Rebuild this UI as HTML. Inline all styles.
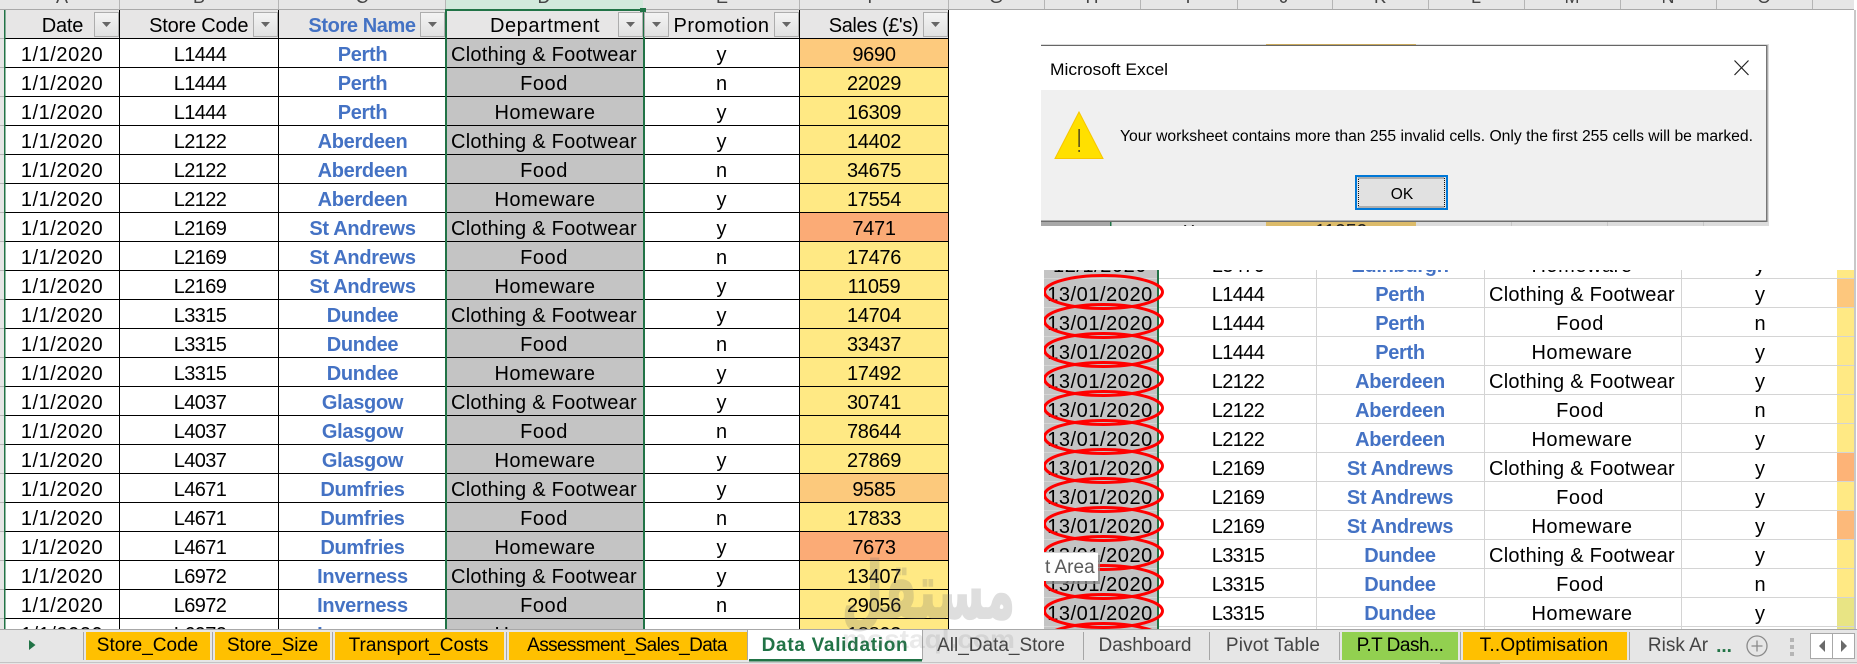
<!DOCTYPE html>
<html lang="en"><head><meta charset="utf-8"><title>Data Validation</title>
<style>
html,body{margin:0;padding:0;background:#fff;width:1857px;height:664px;overflow:hidden}
svg{display:block;font-family:"Liberation Sans",sans-serif}
.c text{text-anchor:middle;font-size:20px;fill:#000}
.b text{text-anchor:middle;font-size:20px;font-weight:bold;letter-spacing:-.3px;fill:#4472c4}
.h{font-size:18px;fill:#444;text-anchor:middle}
.t text{font-size:19px;text-anchor:middle;fill:#000}
.g text{font-size:19px;text-anchor:middle;fill:#444}
.d{letter-spacing:.55px}
.k{letter-spacing:-.6px}
.v{letter-spacing:-.3px}
.cf{letter-spacing:.25px}
.m{letter-spacing:.55px}
</style></head><body>
<svg width="1857" height="664" viewBox="0 0 1857 664" xmlns="http://www.w3.org/2000/svg">
<defs>
<clipPath id="cl"><rect x="0" y="0" width="960" height="629"/></clipPath>
<clipPath id="cr"><rect x="1044" y="270" width="813" height="359"/></clipPath>
<clipPath id="cs"><rect x="1041" y="221" width="728" height="5"/></clipPath>
<linearGradient id="fb" x1="0" y1="0" x2="0" y2="1"><stop offset="0" stop-color="#f4f4f4"/><stop offset="1" stop-color="#e0e0e0"/></linearGradient>
<g id="f"><rect x=".5" y=".5" width="24" height="24" fill="url(#fb)" stroke="#adadad"/><path d="M8 10h9l-4.500 5z" fill="#666"/></g>
</defs>
<rect width="1857" height="664" fill="#fff"/>

<!-- column header bar -->
<rect x="0" y="0" width="1854" height="9" fill="#e6e6e6"/>
<rect x="445" y="0" width="198" height="9" fill="#d2e9dc"/>
<rect x="0" y="9" width="1854" height="1" fill="#a9a9a9"/>
<path d="M119.500 0V9M278.500 0V9M445.500 0V9M799.500 0V9M948.500 0V9M1044.500 0V9M1140.500 0V9M1237.500 0V9M1332.500 0V9M1428.500 0V9M1524.500 0V9M1620.500 0V9M1716.500 0V9M1812.500 0V9" stroke="#b5b5b5" fill="none"/>
<g>
<text class="h" x="62" y="3">A</text><text class="h" x="199" y="3">B</text><text class="h" x="362" y="3">C</text><text class="h" x="544" y="3" fill="#217346">D</text><text class="h" x="722" y="3">E</text><text class="h" x="873" y="3">F</text><text class="h" x="996" y="3">G</text><text class="h" x="1092" y="3">H</text><text class="h" x="1188" y="3">I</text><text class="h" x="1284" y="3">J</text><text class="h" x="1380" y="3">K</text><text class="h" x="1476" y="3">L</text><text class="h" x="1572" y="3">M</text><text class="h" x="1668" y="3">N</text><text class="h" x="1764" y="3">O</text>
</g>

<!-- left table -->
<g clip-path="url(#cl)">
<rect x="0" y="10" width="4" height="620" fill="#e6e6e6"/>
<path d="M0 38.500H4M0 67.500H4M0 96.500H4M0 125.500H4M0 154.500H4M0 183.500H4M0 212.500H4M0 241.500H4M0 270.500H4M0 299.500H4M0 328.500H4M0 357.500H4M0 386.500H4M0 415.500H4M0 444.500H4M0 473.500H4M0 502.500H4M0 531.500H4M0 560.500H4M0 589.500H4M0 618.500H4" stroke="#b5b5b5"/>
<rect x="5" y="10" width="943" height="28" fill="#e7e6e6"/>
<rect x="445" y="39" width="199" height="590" fill="#c4c4c4"/>
<rect x="799" y="39" width="149" height="590" fill="#ffe984"/>
<rect x="800" y="39" width="148" height="28" fill="#fdca7d"/>
<rect x="800" y="213" width="148" height="28" fill="#fbab76"/>
<rect x="800" y="474" width="148" height="28" fill="#fcc97c"/>
<rect x="800" y="532" width="148" height="28" fill="#fbab76"/>
<path d="M5 38.500H948M5 67.500H948M5 96.500H948M5 125.500H948M5 154.500H948M5 183.500H948M5 212.500H948M5 241.500H948M5 270.500H948M5 299.500H948M5 328.500H948M5 357.500H948M5 386.500H948M5 415.500H948M5 444.500H948M5 473.500H948M5 502.500H948M5 531.500H948M5 560.500H948M5 589.500H948M5 618.500H948M119.500 10V629M278.500 10V629M799.500 10V629M948.500 10V629" stroke="#000" fill="none"/>
<rect x="4" y="10" width="1.500" height="620" fill="#217346"/>
<rect x="445" y="10" width="2" height="620" fill="#217346"/>
<rect x="643" y="10" width="2" height="620" fill="#217346"/>
<rect x="445" y="9" width="200" height="2" fill="#217346"/>
<rect x="640" y="8" width="6" height="6" fill="#217346"/>

<use href="#f" x="94" y="12"/><use href="#f" x="253" y="12"/><use href="#f" x="420" y="12"/><use href="#f" x="618" y="12"/><use href="#f" x="644" y="12"/><use href="#f" x="774" y="12"/><use href="#f" x="923" y="12"/>

<g class="c">
<text x="62.500" y="32" style="letter-spacing:-.2px">Date</text><text x="198.700" y="32" style="letter-spacing:-.2px">Store Code</text><text x="545" y="32" class="m">Department</text><text x="721.500" y="32" class="m">Promotion</text><text x="873.500" y="32" style="letter-spacing:-.4px">Sales (£'s)</text>
<text class="d" x="62" y="61">1/1/2020</text><text class="d" x="62" y="90">1/1/2020</text><text class="d" x="62" y="119">1/1/2020</text><text class="d" x="62" y="148">1/1/2020</text><text class="d" x="62" y="177">1/1/2020</text><text class="d" x="62" y="206">1/1/2020</text><text class="d" x="62" y="235">1/1/2020</text><text class="d" x="62" y="264">1/1/2020</text><text class="d" x="62" y="293">1/1/2020</text><text class="d" x="62" y="322">1/1/2020</text><text class="d" x="62" y="351">1/1/2020</text><text class="d" x="62" y="380">1/1/2020</text><text class="d" x="62" y="409">1/1/2020</text><text class="d" x="62" y="438">1/1/2020</text><text class="d" x="62" y="467">1/1/2020</text><text class="d" x="62" y="496">1/1/2020</text><text class="d" x="62" y="525">1/1/2020</text><text class="d" x="62" y="554">1/1/2020</text><text class="d" x="62" y="583">1/1/2020</text><text class="d" x="62" y="612">1/1/2020</text><text class="d" x="62" y="641">1/1/2020</text>
<text class="k" x="200" y="61">L1444</text><text class="k" x="200" y="90">L1444</text><text class="k" x="200" y="119">L1444</text><text class="k" x="200" y="148">L2122</text><text class="k" x="200" y="177">L2122</text><text class="k" x="200" y="206">L2122</text><text class="k" x="200" y="235">L2169</text><text class="k" x="200" y="264">L2169</text><text class="k" x="200" y="293">L2169</text><text class="k" x="200" y="322">L3315</text><text class="k" x="200" y="351">L3315</text><text class="k" x="200" y="380">L3315</text><text class="k" x="200" y="409">L4037</text><text class="k" x="200" y="438">L4037</text><text class="k" x="200" y="467">L4037</text><text class="k" x="200" y="496">L4671</text><text class="k" x="200" y="525">L4671</text><text class="k" x="200" y="554">L4671</text><text class="k" x="200" y="583">L6972</text><text class="k" x="200" y="612">L6972</text><text class="k" x="200" y="641">L6972</text>
<text class="cf" x="544" y="61">Clothing &amp; Footwear</text><text class="m" x="544" y="90">Food</text><text class="m" x="545" y="119">Homeware</text><text class="cf" x="544" y="148">Clothing &amp; Footwear</text><text class="m" x="544" y="177">Food</text><text class="m" x="545" y="206">Homeware</text><text class="cf" x="544" y="235">Clothing &amp; Footwear</text><text class="m" x="544" y="264">Food</text><text class="m" x="545" y="293">Homeware</text><text class="cf" x="544" y="322">Clothing &amp; Footwear</text><text class="m" x="544" y="351">Food</text><text class="m" x="545" y="380">Homeware</text><text class="cf" x="544" y="409">Clothing &amp; Footwear</text><text class="m" x="544" y="438">Food</text><text class="m" x="545" y="467">Homeware</text><text class="cf" x="544" y="496">Clothing &amp; Footwear</text><text class="m" x="544" y="525">Food</text><text class="m" x="545" y="554">Homeware</text><text class="cf" x="544" y="583">Clothing &amp; Footwear</text><text class="m" x="544" y="612">Food</text><text class="m" x="545" y="641">Homeware</text>
<text x="721.500" y="61">y</text><text x="721.500" y="90">n</text><text x="721.500" y="119">y</text><text x="721.500" y="148">y</text><text x="721.500" y="177">n</text><text x="721.500" y="206">y</text><text x="721.500" y="235">y</text><text x="721.500" y="264">n</text><text x="721.500" y="293">y</text><text x="721.500" y="322">y</text><text x="721.500" y="351">n</text><text x="721.500" y="380">y</text><text x="721.500" y="409">y</text><text x="721.500" y="438">n</text><text x="721.500" y="467">y</text><text x="721.500" y="496">y</text><text x="721.500" y="525">n</text><text x="721.500" y="554">y</text><text x="721.500" y="583">y</text><text x="721.500" y="612">n</text><text x="721.500" y="641">y</text>
<text class="v" x="874" y="61">9690</text><text class="v" x="874" y="90">22029</text><text class="v" x="874" y="119">16309</text><text class="v" x="874" y="148">14402</text><text class="v" x="874" y="177">34675</text><text class="v" x="874" y="206">17554</text><text class="v" x="874" y="235">7471</text><text class="v" x="874" y="264">17476</text><text class="v" x="874" y="293">11059</text><text class="v" x="874" y="322">14704</text><text class="v" x="874" y="351">33437</text><text class="v" x="874" y="380">17492</text><text class="v" x="874" y="409">30741</text><text class="v" x="874" y="438">78644</text><text class="v" x="874" y="467">27869</text><text class="v" x="874" y="496">9585</text><text class="v" x="874" y="525">17833</text><text class="v" x="874" y="554">7673</text><text class="v" x="874" y="583">13407</text><text class="v" x="874" y="612">29056</text><text class="v" x="874" y="641">18803</text>
</g>
<g class="b">
<text x="362" y="32" style="letter-spacing:-.4px">Store Name</text>
<text x="362.500" y="61">Perth</text><text x="362.500" y="90">Perth</text><text x="362.500" y="119">Perth</text><text x="362.500" y="148">Aberdeen</text><text x="362.500" y="177">Aberdeen</text><text x="362.500" y="206">Aberdeen</text><text x="362.500" y="235">St Andrews</text><text x="362.500" y="264">St Andrews</text><text x="362.500" y="293">St Andrews</text><text x="362.500" y="322">Dundee</text><text x="362.500" y="351">Dundee</text><text x="362.500" y="380">Dundee</text><text x="362.500" y="409">Glasgow</text><text x="362.500" y="438">Glasgow</text><text x="362.500" y="467">Glasgow</text><text x="362.500" y="496">Dumfries</text><text x="362.500" y="525">Dumfries</text><text x="362.500" y="554">Dumfries</text><text x="362.500" y="583">Inverness</text><text x="362.500" y="612">Inverness</text><text x="362.500" y="641">Inverness</text>
</g>
</g>

<!-- right table -->
<g clip-path="url(#cr)">
<rect x="1044" y="270" width="113" height="359" fill="#c4c4c4"/>
<rect x="1837" y="270" width="17" height="359" fill="#ffe984"/>
<rect x="1837" y="278" width="17" height="29" fill="#fdc77d"/>
<rect x="1837" y="452" width="17" height="29" fill="#fdb377"/>
<rect x="1837" y="510" width="17" height="29" fill="#fcb97a"/>
<rect x="1837" y="597" width="17" height="32" fill="#e8e484"/>
<path d="M1044 278.500H1854M1044 307.500H1854M1044 336.500H1854M1044 365.500H1854M1044 394.500H1854M1044 423.500H1854M1044 452.500H1854M1044 481.500H1854M1044 510.500H1854M1044 539.500H1854M1044 568.500H1854M1044 597.500H1854M1044 626.500H1854M1316.500 270V629M1484.500 270V629M1681.500 270V629" stroke="#d4d4d4" fill="none"/>
<rect x="1157" y="270" width="2" height="359" fill="#217346"/>
<g class="c">
<text class="d" x="1100" y="272">12/1/2020</text><text class="d" x="1100" y="301">13/01/2020</text><text class="d" x="1100" y="330">13/01/2020</text><text class="d" x="1100" y="359">13/01/2020</text><text class="d" x="1100" y="388">13/01/2020</text><text class="d" x="1100" y="417">13/01/2020</text><text class="d" x="1100" y="446">13/01/2020</text><text class="d" x="1100" y="475">13/01/2020</text><text class="d" x="1100" y="504">13/01/2020</text><text class="d" x="1100" y="533">13/01/2020</text><text class="d" x="1100" y="562">13/01/2020</text><text class="d" x="1100" y="591">13/01/2020</text><text class="d" x="1100" y="620">13/01/2020</text>
<text class="k" x="1238" y="272">L3470</text><text class="k" x="1238" y="301">L1444</text><text class="k" x="1238" y="330">L1444</text><text class="k" x="1238" y="359">L1444</text><text class="k" x="1238" y="388">L2122</text><text class="k" x="1238" y="417">L2122</text><text class="k" x="1238" y="446">L2122</text><text class="k" x="1238" y="475">L2169</text><text class="k" x="1238" y="504">L2169</text><text class="k" x="1238" y="533">L2169</text><text class="k" x="1238" y="562">L3315</text><text class="k" x="1238" y="591">L3315</text><text class="k" x="1238" y="620">L3315</text>
<text class="m" x="1582" y="272">Homeware</text><text class="cf" x="1582" y="301">Clothing &amp; Footwear</text><text class="m" x="1580" y="330">Food</text><text class="m" x="1582" y="359">Homeware</text><text class="cf" x="1582" y="388">Clothing &amp; Footwear</text><text class="m" x="1580" y="417">Food</text><text class="m" x="1582" y="446">Homeware</text><text class="cf" x="1582" y="475">Clothing &amp; Footwear</text><text class="m" x="1580" y="504">Food</text><text class="m" x="1582" y="533">Homeware</text><text class="cf" x="1582" y="562">Clothing &amp; Footwear</text><text class="m" x="1580" y="591">Food</text><text class="m" x="1582" y="620">Homeware</text>
<text x="1760" y="272">y</text><text x="1760" y="301">y</text><text x="1760" y="330">n</text><text x="1760" y="359">y</text><text x="1760" y="388">y</text><text x="1760" y="417">n</text><text x="1760" y="446">y</text><text x="1760" y="475">y</text><text x="1760" y="504">y</text><text x="1760" y="533">y</text><text x="1760" y="562">y</text><text x="1760" y="591">n</text><text x="1760" y="620">y</text>
</g>
<g class="b">
<text x="1400" y="272">Edinburgh</text><text x="1400" y="301">Perth</text><text x="1400" y="330">Perth</text><text x="1400" y="359">Perth</text><text x="1400" y="388">Aberdeen</text><text x="1400" y="417">Aberdeen</text><text x="1400" y="446">Aberdeen</text><text x="1400" y="475">St Andrews</text><text x="1400" y="504">St Andrews</text><text x="1400" y="533">St Andrews</text><text x="1400" y="562">Dundee</text><text x="1400" y="591">Dundee</text><text x="1400" y="620">Dundee</text>
</g>
<g fill="none" stroke="#f00" stroke-width="3">
<ellipse cx="1103.500" cy="292" rx="59" ry="16.500"/><ellipse cx="1103.500" cy="321" rx="59" ry="16.500"/><ellipse cx="1103.500" cy="350" rx="59" ry="16.500"/><ellipse cx="1103.500" cy="379" rx="59" ry="16.500"/><ellipse cx="1103.500" cy="408" rx="59" ry="16.500"/><ellipse cx="1103.500" cy="437" rx="59" ry="16.500"/><ellipse cx="1103.500" cy="466" rx="59" ry="16.500"/><ellipse cx="1103.500" cy="495" rx="59" ry="16.500"/><ellipse cx="1103.500" cy="524" rx="59" ry="16.500"/><ellipse cx="1103.500" cy="553" rx="59" ry="16.500"/><ellipse cx="1103.500" cy="582" rx="59" ry="16.500"/><ellipse cx="1103.500" cy="611" rx="59" ry="16.500"/><ellipse cx="1103.500" cy="640" rx="59" ry="16.500"/>
</g>
</g>
<rect x="1854" y="10" width="2" height="620" fill="#c8c8c8"/>

<!-- tooltip -->
<rect x="1046" y="555" width="54" height="29" fill="#8a8a8a" opacity=".75"/>
<rect x="1044" y="552" width="54" height="29" fill="#fff"/>
<rect x="1044" y="552" width="54" height="1" fill="#d0d0d0"/>
<text x="1045" y="573" font-size="19" fill="#5a5a5a">t Area</text>

<!-- dialog backdrop -->
<rect x="1041" y="44" width="728" height="182" fill="#dcdcdc"/>
<rect x="1041" y="221" width="69" height="5" fill="#a8a8a8"/>
<rect x="1110" y="221" width="1.500" height="5" fill="#217346"/>
<rect x="1266" y="221" width="150" height="5" fill="#dcbb6a"/>
<rect x="1266" y="44" width="150" height="2" fill="#c9a95c"/>
<path d="M1511.500 221v5M1607.500 221v5M1703.500 221v5" stroke="#c6c6c6" fill="none"/>
<g clip-path="url(#cs)" fill="#222" font-size="20" text-anchor="middle">
<text x="1189" y="236">y</text><text x="1341" y="238" style="letter-spacing:-.3px">11059</text><text x="1048" y="238">re</text>
</g>
<!-- dialog -->
<rect x="1041" y="45" width="726" height="45" fill="#fff"/>
<rect x="1041" y="90" width="726" height="131" fill="#f0f0f0"/>
<rect x="1041" y="45" width="726" height="1" fill="#666"/>
<rect x="1041" y="220.500" width="726" height="1.500" fill="#6e6e6e"/>
<rect x="1766" y="45" width="1.500" height="177" fill="#777"/>
<text x="1050" y="75" font-size="17" fill="#000" textLength="118" lengthAdjust="spacingAndGlyphs">Microsoft Excel</text>
<path d="M1734.500 60.500L1748.500 75M1748.500 60.500L1734.500 75" stroke="#222" stroke-width="1.200" fill="none"/>
<path d="M1079 112L1103 158.500H1055Z" fill="#ffe000" stroke="#f7c600" stroke-width="1"/>
<rect x="1078.500" y="129" width="1.200" height="18" fill="#222"/>
<rect x="1078.500" y="150" width="1.200" height="2" fill="#222"/>
<text x="1120" y="141" font-size="15.500" fill="#000" textLength="633" lengthAdjust="spacingAndGlyphs">Your worksheet contains more than 255 invalid cells. Only the first 255 cells will be marked.</text>
<rect x="1356" y="176" width="91" height="33" fill="#e1e1e1" stroke="#0078d7" stroke-width="2"/>
<rect x="1358.500" y="178" width="86" height="29" fill="none" stroke="#111" stroke-width="1" stroke-dasharray="1 1"/>
<text x="1402" y="199" font-size="15.500" fill="#000" text-anchor="middle">OK</text>

<!-- tab bar -->
<rect x="0" y="629" width="1857" height="35" fill="#e6e6e6"/>
<rect x="0" y="629" width="1857" height="1" fill="#a8a8a8"/>
<rect x="0" y="662" width="1857" height="1" fill="#c4c4c4"/>
<rect x="1440" y="662" width="60" height="2" fill="#bdbdbd"/>
<path d="M29 640l6.500 5-6.500 5z" fill="#217346"/>
<path d="M83.500 632V660M212.500 632V660M332.500 632V660M506.500 632V660M1083.500 632V660M1209.500 632V660M1339.500 632V660M1460.500 632V660M1629.500 632V660" stroke="#a6a6a6" fill="none"/>
<rect x="86" y="632" width="124" height="28" fill="#ffc000"/>
<rect x="215" y="632" width="115" height="28" fill="#ffc000"/>
<rect x="335" y="632" width="169" height="28" fill="#ffc000"/>
<rect x="509" y="632" width="238" height="28" fill="#ffc000"/>
<rect x="1342" y="632" width="116" height="28" fill="#92d050"/>
<rect x="1463" y="632" width="164" height="28" fill="#ffc000"/>
<path d="M747.500 660V629.500H922.500V660" fill="#fff" stroke="#a8a8a8"/>
<rect x="748" y="630" width="174" height="30" fill="#fff"/>
<rect x="749" y="659" width="173" height="2.500" fill="#217346"/>
<g class="t">
<text x="147.500" y="651">Store_Code</text><text x="272.500" y="651" style="letter-spacing:-.2px">Store_Size</text><text x="418.500" y="651">Transport_Costs</text><text x="627" y="651" style="letter-spacing:-.6px">Assessment_Sales_Data</text><text x="1400" y="651" style="letter-spacing:-.5px">P.T Dash...</text><text x="1544" y="651" style="letter-spacing:.2px">T..Optimisation</text>
</g>
<text x="835" y="651" font-size="19" font-weight="bold" fill="#217346" text-anchor="middle" style="letter-spacing:.7px">Data Validation</text>
<g class="g">
<text x="1001" y="651">All_Data_Store</text><text x="1145" y="651">Dashboard</text><text x="1273" y="651" style="letter-spacing:.15px">Pivot Table</text><text x="1678" y="651">Risk Ar</text>
</g>
<text x="1724" y="652" font-size="19" font-weight="bold" fill="#217346" text-anchor="middle">...</text>
<circle cx="1757" cy="646" r="10" fill="none" stroke="#8a8a8a" stroke-width="1.300"/>
<path d="M1751.500 646h11M1757 640.500v11" stroke="#8a8a8a" stroke-width="1.300"/>
<rect x="1790" y="638" width="4" height="4" fill="#b5b5b5"/><rect x="1790" y="645" width="4" height="4" fill="#b5b5b5"/><rect x="1790" y="652" width="4" height="4" fill="#b5b5b5"/>
<rect x="1810.500" y="633.500" width="22" height="25" fill="#fff" stroke="#a8a8a8"/>
<rect x="1832.500" y="633.500" width="22" height="25" fill="#fff" stroke="#a8a8a8"/>
<path d="M1825 640v12l-6-6z" fill="#6a6a6a"/>
<path d="M1841 640v12l6-6z" fill="#6a6a6a"/>

<!-- watermark -->
<text x="842" y="618" font-size="78" font-weight="bold" fill="#6e6e6e" stroke="#6e6e6e" stroke-width="2" opacity=".22" textLength="173" lengthAdjust="spacingAndGlyphs" style="font-family:'DejaVu Sans',sans-serif">مستقل</text>
<text x="842" y="648" font-size="26" font-weight="bold" fill="#6e6e6e" opacity=".14" textLength="173" lengthAdjust="spacingAndGlyphs">mostaql.com</text>
</svg>
</body></html>
